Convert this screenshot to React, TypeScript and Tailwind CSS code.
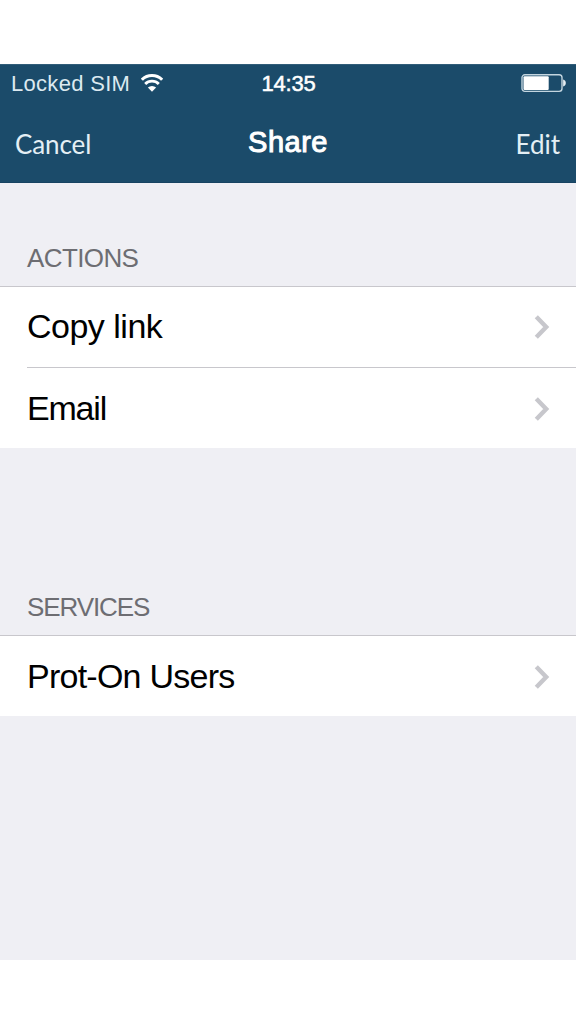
type Item = { label: string; tracking: string };

const actions: Item[] = [
  { label: "Copy link", tracking: "tracking-[-0.5px]" },
  { label: "Email", tracking: "tracking-[-1.2px]" },
];

const services: Item[] = [{ label: "Prot-On Users", tracking: "tracking-[-0.75px]" }];

const WifiIcon = () => (
  <svg width="22" height="18" viewBox="0 0 22 18" fill="none" stroke="#fff">
    <path d="M0.9 5.8a14.3 14.3 0 0 1 20.2 0" strokeWidth="3" />
    <path d="M4.2 9.9a9.6 9.6 0 0 1 13.6 0" strokeWidth="2.9" />
    <path d="M11 17.8 6.9 13.6a5.8 5.8 0 0 1 8.2 0Z" fill="#fff" stroke="none" />
  </svg>
);

const BatteryIcon = () => (
  <svg width="45" height="19" viewBox="0 0 45 19" fill="none">
    <rect x="1" y="0.8" width="40" height="16.6" rx="2.8" stroke="#c3d5df" strokeWidth="1.4" />
    <rect x="2.5" y="2.2" width="25.2" height="13.8" rx="1" fill="#fff" />
    <path d="M42.1 5.6c1.8.4 2.7 1.8 2.7 3.5s-.9 3.1-2.7 3.5Z" fill="#e6eef2" />
  </svg>
);

const Chevron = () => (
  <svg width="16" height="24" viewBox="0 0 16 24" fill="none">
    <path d="M2.3 1.8 12.2 12 2.3 22.2" stroke="#c7c7cc" strokeWidth="4.4" />
  </svg>
);

const Row = ({ item, divider }: { item: Item; divider: boolean }) => (
  <div className="pl-[27px]">
    <button
      className={`flex w-full items-center justify-between pr-[26px] text-left ${
        divider ? "h-[81px] border-b border-[#c8c7cc]" : "h-20 pt-px"
      }`}
    >
      <span className={`pb-0.5 text-[34px] leading-10 text-black ${item.tracking}`}>{item.label}</span>
      <Chevron />
    </button>
  </div>
);

const Section = ({ items }: { items: Item[] }) => (
  <div className="border-t border-[#c8c7cc] bg-white">
    {items.map((item, i) => (
      <Row key={item.label} item={item} divider={i < items.length - 1} />
    ))}
  </div>
);

export default function App() {
  return (
    <div className="flex h-screen flex-col bg-white py-16 font-['Liberation_Sans',Arial,sans-serif]">
      <header className="h-[119px] shrink-0 border-t border-b border-t-[#315d79] border-b-[#174362] bg-[#1b4b6a]">
        {/* Status bar */}
        <div className="grid h-9 grid-cols-3 items-center pl-[11px] pr-[10px]">
          <div className="flex items-center gap-[11px] whitespace-nowrap">
            <span className="pt-px text-[22px] leading-7 tracking-[0.3px] text-[#dce9f0]">Locked SIM</span>
            <WifiIcon />
          </div>
          <span className="pt-px text-center text-[22px] leading-7 tracking-[-0.2px] text-white [-webkit-text-stroke:0.5px_white]">
            14:35
          </span>
          <div className="flex justify-end">
            <BatteryIcon />
          </div>
        </div>

        {/* Navigation bar */}
        <div className="grid h-[82px] grid-cols-3 items-center px-[15px]">
          <button className="pt-[3px] text-left font-['Lato',sans-serif] text-[26px] leading-8 tracking-[-0.1px] text-[#e4eff5]">
            Cancel
          </button>
          <h1 className="text-center text-[29px] leading-8 tracking-[0.5px] text-white [-webkit-text-stroke:1px_white]">
            Share
          </h1>
          <button className="pt-[3px] pr-px text-right font-['Lato',sans-serif] text-[26px] leading-8 text-[#e4eff5]">
            Edit
          </button>
        </div>
      </header>

      <main className="flex-1 bg-[#efeff4]">
        <h2 className="flex h-[103px] items-end pb-3 pl-[27px] text-[26px] leading-8 tracking-[-0.6px] text-[#6d6d72]">
          ACTIONS
        </h2>
        <Section items={actions} />
        <h2 className="flex h-[187px] items-end pb-3 pl-[27px] text-[26px] leading-8 tracking-[-1.1px] text-[#6d6d72]">
          SERVICES
        </h2>
        <Section items={services} />
      </main>
    </div>
  );
}
